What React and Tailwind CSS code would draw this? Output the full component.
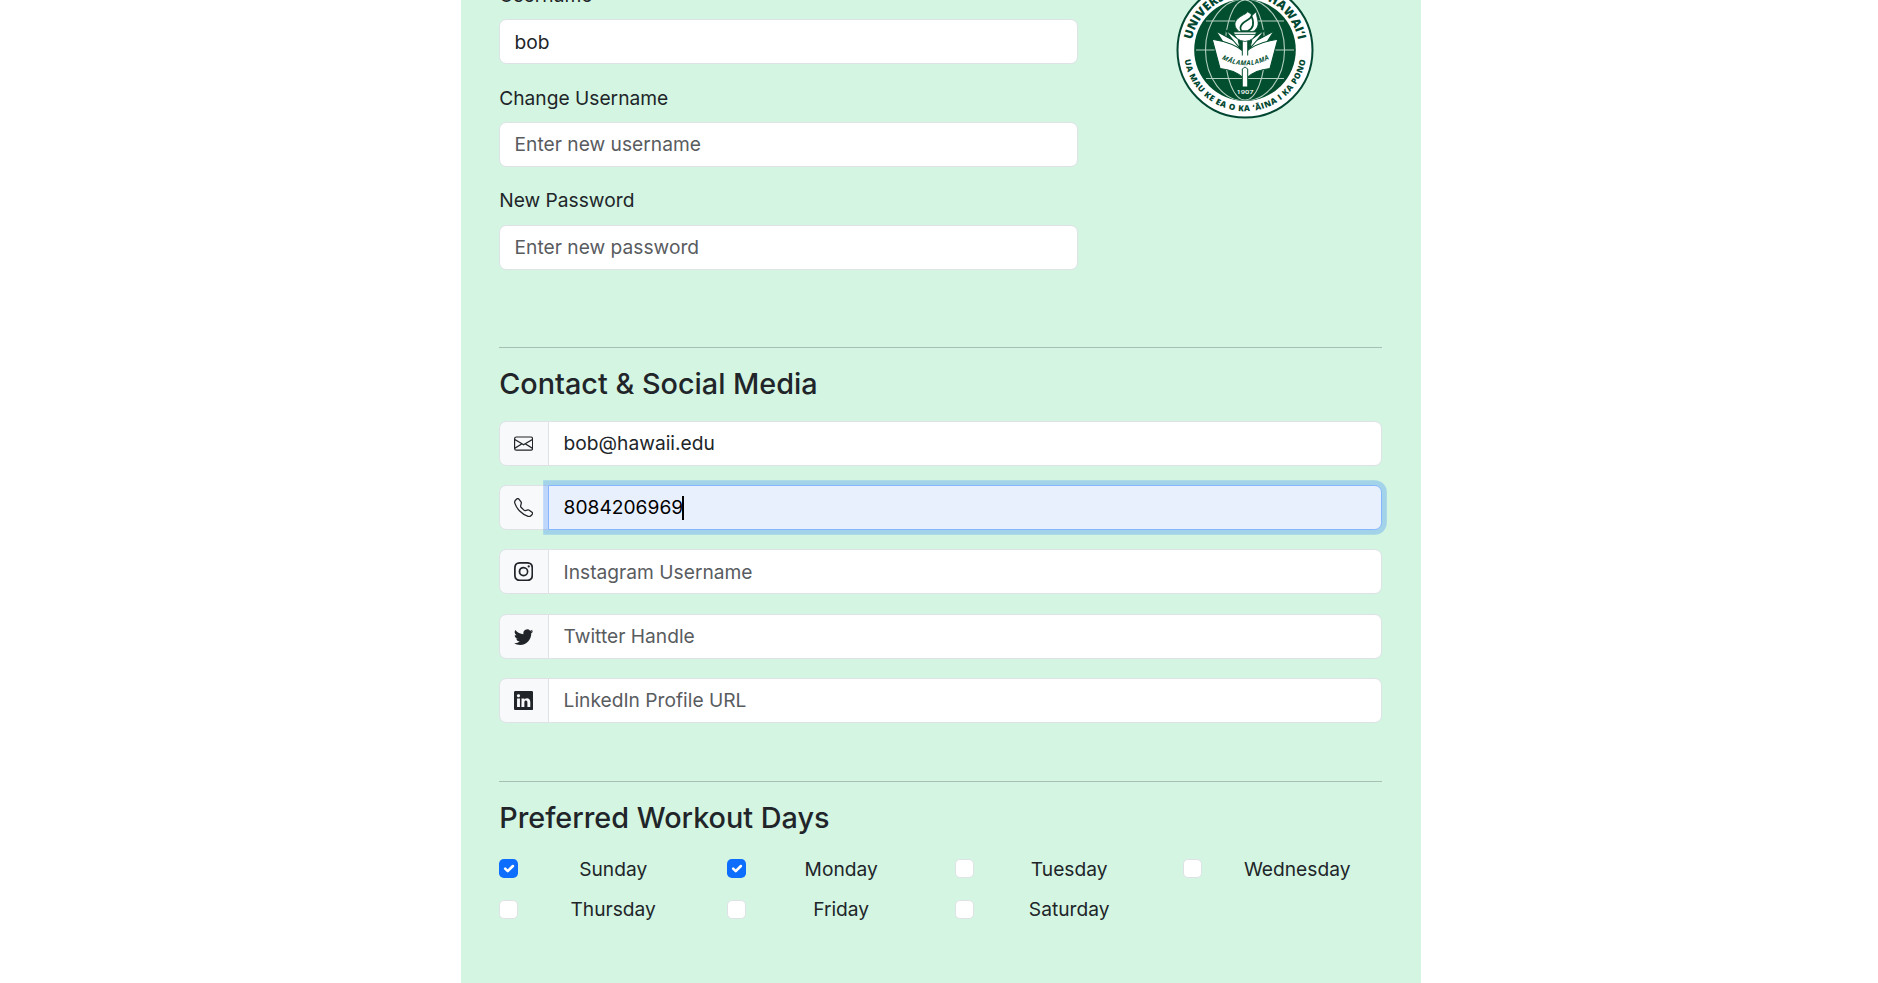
import { BsEnvelope, BsTelephone, BsInstagram, BsTwitter, BsLinkedin } from "react-icons/bs";

const fields = [
  { label: "Username", value: "bob" },
  { label: "Change Username", placeholder: "Enter new username", nudge: "pb-[1.6px]" },
  { label: "New Password", placeholder: "Enter new password" },
];

const contacts = [
  { Icon: BsEnvelope, value: "bob@hawaii.edu" },
  { Icon: BsTelephone, value: "8084206969", focused: true },
  { Icon: BsInstagram, placeholder: "Instagram Username", nudge: "pt-[1.6px]" },
  { Icon: BsTwitter, placeholder: "Twitter Handle" },
  { Icon: BsLinkedin, placeholder: "LinkedIn Profile URL" },
];

const days = [
  ["Sunday", true],
  ["Monday", true],
  ["Tuesday", false],
  ["Wednesday", false],
  ["Thursday", false],
  ["Friday", false],
  ["Saturday", false],
];

function Seal() {
  return (
    <svg viewBox="-70 -70 140 140" className="-mt-[0.5px] h-[140px] w-[140px] shrink-0" fontFamily="'Open Sans', 'Noto Sans', sans-serif">
      <defs>
        <path id="ring-top" d="M-54 0A54 54 0 0 1 54 0" />
        <path id="ring-bottom" d="M-61.3 0A61.3 61.3 0 0 0 61.3 0" />
        <path id="book-line" d="M-26 7.5Q0 23 27 7.5" />
        <clipPath id="globe">
          <circle r="50.5" />
        </clipPath>
      </defs>
      <circle r="67.5" fill="#fff" stroke="#024731" strokeWidth="2" />
      <circle r="50.8" fill="#024f2f" />
      <g clipPath="url(#globe)" fill="none" stroke="#b4d0c2" strokeWidth="1.1">
        <ellipse rx="39.5" ry="51" />
        <ellipse rx="20" ry="50" />
        <path d="M-39-29H-10M12-29H39M-49 0H-30M30 0H49M-39 28.5H39" />
      </g>
      <g fill="#fff" stroke="#024f2f" strokeWidth="1.1" strokeLinejoin="round">
        <path d="M-29-19L-5-6L-4 2Q-11-5-22-8Z" />
        <path d="M-20-20.5L-7-11L-5-2Q-12-9-20-20.5Z" />
        <path d="M29-19L5-6L4 2Q11-5 22-8Z" />
        <path d="M20-20.5L7-11L5-2Q12-9 20-20.5Z" />
        <path d="M-32.8-10.8Q-11-7.5 0 2.5Q11-7.5 32.8-10.8L25 18.5Q10 20 2.5 27.5H-2.5Q-10 20-25 18.5Z" />
      </g>
      <path d="M-3.2 19L0 16.5L3.2 19V36H-3.2Z" fill="#024f2f" />
      <path d="M-2.2 19L0 17.5L2.2 19V36.5H-2.2Z" fill="#fff" />
      <path d="M-3.2-9H3.2V5.5H-3.2Z" fill="#024f2f" />
      <path d="M-2.2-9H2.2V7H-2.2Z" fill="#fff" />
      <path d="M-11.5-18H11.5Q9.5-9.5 0-8.5Q-9.5-9.5-11.5-18Z" fill="#fff" stroke="#024f2f" strokeWidth="0.8" />
      <path d="M-10-15.6H10" stroke="#024f2f" strokeWidth="0.9" />
      <path d="M-6-18.5C-14-26-9-31.5 0-36C2-37 2-37.5 2-38.5C5-37 6-36 7-34.5L11.5-38.5C10.5-34 16-26 11-21C10-19.5 9-18.8 7-18.5Z" fill="#fff" stroke="#024f2f" strokeWidth="0.8" />
      <path d="M-3.5-19C-7-24-1-28 2.5-30C5-31.5 6-32.5 6.5-34C9-28 9-22 3-19Z" fill="#fff" stroke="#024f2f" strokeWidth="1.7" />
      <text fill="#024731" fontSize="12" fontWeight="800">
        <textPath href="#ring-top" startOffset="50%" textAnchor="middle" textLength="149">UNIVERSITY OF HAWAIʻI</textPath>
      </text>
      <text fill="#024731" fontSize="8.2" fontWeight="800">
        <textPath href="#ring-bottom" startOffset="50%" textAnchor="middle" textLength="172">UA MAU KE EA O KA ʻĀINA I KA PONO</textPath>
      </text>
      <text fill="#024f2f" fontSize="6.6" fontWeight="700" fontStyle="italic">
        <textPath href="#book-line" startOffset="50%" textAnchor="middle" textLength="50">MĀLAMALAMA</textPath>
      </text>
      <text y="43.6" textAnchor="middle" fill="#fff" fontSize="5.6" fontWeight="600" textLength="17" lengthAdjust="spacingAndGlyphs">1907</text>
    </svg>
  );
}

function Section({ title, children }) {
  return (
    <section className="flex flex-col gap-[19.2px]">
      <div className="h-px bg-[#212529]/25" />
      <h4 className="text-[28.8px] leading-[34.56px] font-medium">{title}</h4>
      {children}
    </section>
  );
}

export default function App() {
  return (
    <div className="flex h-[983px] justify-center overflow-hidden bg-white pl-[3.6px] font-['Inter',sans-serif] text-[19.2px] leading-[28.8px] text-[#212529]">
      <main className="-mt-[19.1px] h-[1010px] w-[960px] bg-[#d4f5e2] px-[38.4px]">
        <div className="flex h-[365.7px] gap-[28.8px]">
          <div className="flex w-[578.8px] flex-col gap-[19.2px]">
            {fields.map((f) => (
              <label key={f.label} className="flex flex-col gap-[9.6px]">
                <span>{f.label}</span>
                <input
                  defaultValue={f.value}
                  placeholder={f.placeholder}
                  className={`h-[45.2px] rounded-[7.2px] border border-[#dee2e6] bg-white px-[14.4px] placeholder:text-[#595c5f] ${f.nudge || ""}`}
                />
              </label>
            ))}
          </div>
          <div className="flex flex-1 items-start justify-center">
            <Seal />
          </div>
        </div>
        <div className="flex flex-col gap-[57.6px]">
          <Section title="Contact & Social Media">
            {contacts.map(({ Icon, value, placeholder, focused, nudge }) => (
              <div key={value || placeholder} className="flex h-[45.2px]">
                <span className="flex w-[50px] shrink-0 items-center justify-center rounded-l-[7.2px] border border-[#dee2e6] bg-[#f8f9fa] pr-[1.2px]">
                  <Icon className="size-[19.2px]" />
                </span>
                {focused ? (
                  <div className="relative -ml-px flex flex-1 items-center rounded-r-[7.2px] border border-[#86b7fe] bg-[#e8f0fe] px-[14.4px] text-black shadow-[0_0_0_4.8px_rgba(13,110,253,0.25)]">
                    {value}
                    <span className="-ml-px h-6 w-0.5 bg-black" />
                  </div>
                ) : (
                  <input
                    defaultValue={value}
                    placeholder={placeholder}
                    className={`-ml-px min-w-0 flex-1 rounded-r-[7.2px] border border-[#dee2e6] bg-white px-[14.4px] placeholder:text-[#595c5f] ${nudge || ""}`}
                  />
                )}
              </div>
            ))}
          </Section>
          <Section title="Preferred Workout Days">
            <div className="grid grid-cols-4 gap-x-[28.8px] gap-y-3">
              {days.map(([day, checked], i) => (
                <label key={day} className="flex h-[28.8px] items-start gap-[9.6px]">
                  <span
                    className={
                      checked
                        ? "mt-[4.5px] flex size-[19.2px] items-center justify-center rounded-[4.8px] bg-[#0d6efd]"
                        : "mt-[4.5px] size-[19.2px] rounded-[4.8px] border border-[#dee2e6] bg-white"
                    }
                  >
                    {checked && (
                      <svg viewBox="0 0 20 20" className="size-[17.2px]" fill="none" stroke="#fff" strokeWidth="3" strokeLinecap="round" strokeLinejoin="round">
                        <path d="m6 10 3 3 6-6" />
                      </svg>
                    )}
                  </span>
                  <span className={i > 3 ? "-mt-[0.7px] flex-1 text-center" : "flex-1 text-center"}>{day}</span>
                </label>
              ))}
            </div>
          </Section>
        </div>
      </main>
    </div>
  );
}
